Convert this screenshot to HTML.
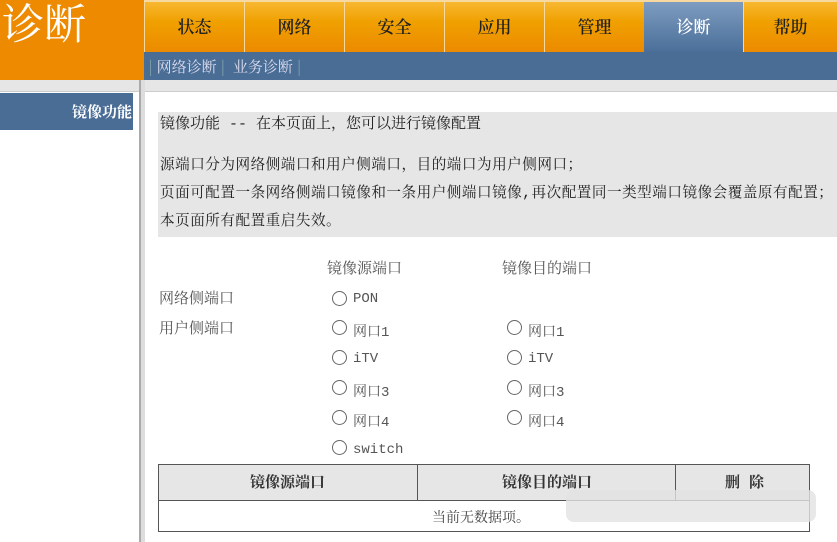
<!DOCTYPE html><html><head><meta charset="utf-8"><style>
*{margin:0;padding:0;box-sizing:border-box}
body{width:837px;height:542px;overflow:hidden;background:#fff;position:relative;font-family:"Liberation Mono","Noto Serif CJK SC",serif;color:#333}
.a{position:absolute;white-space:nowrap}
.tab{position:absolute;top:2px;height:50px;width:99px;background:linear-gradient(#f7b830,#f0a000 40%,#ec8a00);text-align:center;line-height:48px;font-size:17px;font-weight:600;color:#222;font-family:"Noto Serif CJK SC",serif}
.r{position:absolute;width:15px;height:15px;border:1.3px solid #666;border-radius:50%}
.t{font-size:14px;color:#555}
</style></head><body>
<div class="a" style="left:0;top:0;width:144px;height:80px;background:#ee8a00"></div>
<div class="a" style="left:2px;top:-8px;font-size:42px;color:#fff;font-family:'Noto Serif CJK SC',serif">诊断</div>
<div class="a" style="left:144px;top:0;width:693px;height:52px;background:#f7d9a0"></div>
<div class="tab" style="left:145px">状态</div>
<div class="tab" style="left:245px">网络</div>
<div class="tab" style="left:345px">安全</div>
<div class="tab" style="left:445px">应用</div>
<div class="tab" style="left:545px">管理</div>
<div class="tab" style="left:644px;background:linear-gradient(#7e9cc0,#4a6f99);color:#fff">诊断</div>
<div class="tab" style="left:744px;width:93px">帮助</div>
<div class="a" style="left:144px;top:52px;width:693px;height:29px;background:#4a6d96"></div>
<div class="a" style="left:148px;top:56px;font-size:15px;color:#dde;line-height:22px;font-family:'Noto Serif CJK SC',serif"><span style="color:#8aa">|</span> 网络诊断 <span style="color:#8aa">|</span> &nbsp;业务诊断 <span style="color:#8aa">|</span></div>
<div class="a" style="left:0;top:80px;width:837px;height:12px;background:#e6e6e6;border-bottom:1px solid #ccc"></div>
<div class="a" style="left:139px;top:80px;width:6px;height:462px;background:#ddd;border-left:2px solid #aaa"></div>
<div class="a" style="left:0;top:93px;width:133px;height:37px;background:#4a6d96;color:#fff;font-size:15px;font-weight:bold;text-align:right;line-height:37px;padding-right:1px;overflow:hidden;font-family:'Noto Serif CJK SC',serif">镜像功能</div>
<div class="a" style="left:158px;top:112px;width:679px;height:125px;background:#e6e6e6"></div>
<div class="a" style="left:160px;top:114px;font-size:15px;color:#222;line-height:22px">镜像功能 -- 在本页面上，您可以进行镜像配置</div>
<div class="a" style="left:160px;top:152px;font-size:14.6px;letter-spacing:0.5px;color:#222;line-height:28px">源端口分为网络侧端口和用户侧端口，目的端口为用户侧网口；<br>页面可配置一条网络侧端口镜像和一条用户侧端口镜像,再次配置同一类型端口镜像会覆盖原有配置；<br>本页面所有配置重启失效。</div>
<div class="a t" style="left:327px;top:257px;font-size:15px">镜像源端口</div>
<div class="a t" style="left:502px;top:257px;font-size:15px">镜像目的端口</div>
<div class="a t" style="left:159px;top:287px;font-size:15px">网络侧端口</div>
<div class="a t" style="left:159px;top:317px;font-size:15px">用户侧端口</div>
<div class="r" style="left:332px;top:291px"></div><div class="a t" style="left:353px;top:291px">PON</div>
<div class="r" style="left:332px;top:320px"></div><div class="a t" style="left:353px;top:321px">网口1</div>
<div class="r" style="left:332px;top:350px"></div><div class="a t" style="left:353px;top:351px">iTV</div>
<div class="r" style="left:332px;top:380px"></div><div class="a t" style="left:353px;top:381px">网口3</div>
<div class="r" style="left:332px;top:410px"></div><div class="a t" style="left:353px;top:411px">网口4</div>
<div class="r" style="left:332px;top:440px"></div><div class="a t" style="left:353px;top:442px">switch</div>
<div class="r" style="left:507px;top:320px"></div><div class="a t" style="left:528px;top:321px">网口1</div>
<div class="r" style="left:507px;top:350px"></div><div class="a t" style="left:528px;top:351px">iTV</div>
<div class="r" style="left:507px;top:380px"></div><div class="a t" style="left:528px;top:381px">网口3</div>
<div class="r" style="left:507px;top:410px"></div><div class="a t" style="left:528px;top:411px">网口4</div>
<div class="a" style="left:158px;top:464px;width:652px;height:68px;border:1.5px solid #555"></div>
<div class="a" style="left:159px;top:465px;width:650px;height:36px;background:#e6e6e6;border-bottom:1.5px solid #555"></div>
<div class="a" style="left:417px;top:465px;width:1px;height:36px;background:#555"></div>
<div class="a" style="left:675px;top:465px;width:1px;height:36px;background:#555"></div>
<div class="a" style="left:250px;top:471px;font-size:15px;color:#333;font-weight:bold">镜像源端口</div>
<div class="a" style="left:502px;top:471px;font-size:15px;color:#333;font-weight:bold">镜像目的端口</div>
<div class="a" style="left:725px;top:471px;font-size:15px;color:#333;font-weight:bold">删 除</div>
<div class="a" style="left:432px;top:507px;font-size:14px;color:#444">当前无数据项。</div>
<div class="a" style="left:566px;top:490px;width:250px;height:32px;background:#e2e2e2;border-radius:8px;opacity:.8"></div>
</body></html>
